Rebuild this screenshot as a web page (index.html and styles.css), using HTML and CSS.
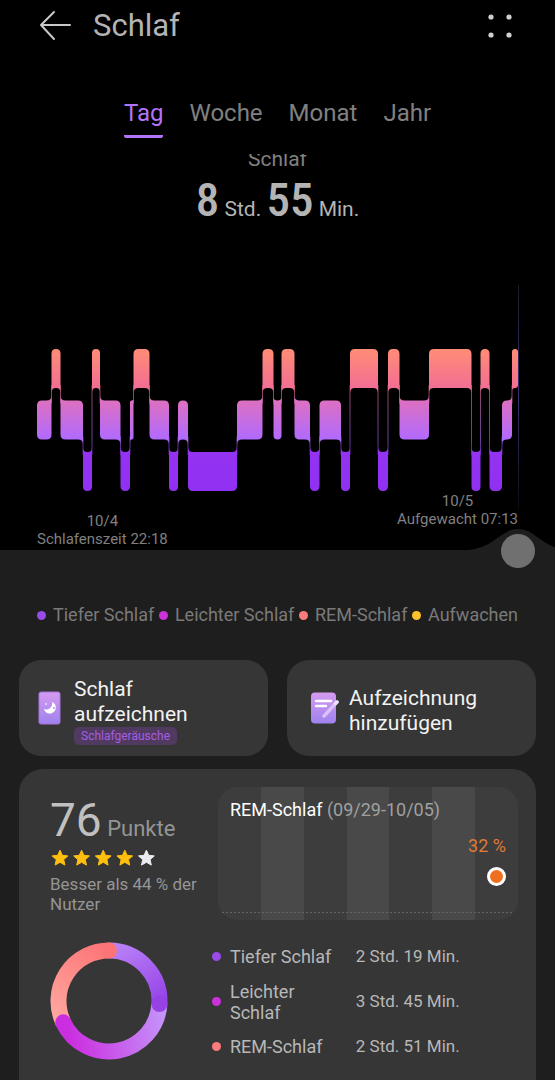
FILE: index.html
```html
<!DOCTYPE html>
<html lang="de">
<head>
    <meta charset="UTF-8">
    <meta name="viewport" content="width=device-width, initial-scale=1.0">
    <title>Schlaf</title>
    <link rel="stylesheet" href="styles.css">
</head>
<body>
    <header class="topbar">
        <button type="button" class="icon-btn" aria-label="Zurück">
            <svg width="32" height="32" viewBox="0 0 32 32" fill="none" stroke="#c8c8c8" stroke-width="2" stroke-linecap="round" stroke-linejoin="round">
                <path d="M15 2 L2 15 L15 29 M2 15 H31"/>
            </svg>
        </button>
        <h1>Schlaf</h1>
        <button type="button" class="icon-btn" aria-label="Menü">
            <svg width="24" height="24" viewBox="0 0 24 24" fill="#d0d0d0">
                <circle cx="3" cy="3" r="2.6"/><circle cx="21" cy="3" r="2.6"/>
                <circle cx="3" cy="21" r="2.6"/><circle cx="21" cy="21" r="2.6"/>
            </svg>
        </button>
    </header>

    <nav class="tabs">
        <a href="#tag" class="active">Tag</a>
        <a href="#woche">Woche</a>
        <a href="#monat">Monat</a>
        <a href="#jahr">Jahr</a>
    </nav>

    <main>
        <section class="total">
            <h2>Schlaf</h2>
            <p><b>8</b> Std. <b>55</b> Min.</p>
        </section>

        <section class="timeline">
            <svg id="chart" viewBox="0 280 555 212">
                <defs>
                    <linearGradient id="stages" gradientUnits="userSpaceOnUse" x1="0" y1="349" x2="0" y2="491">
                        <stop offset="0" stop-color="#ff8d76"/>
                        <stop offset="0.28" stop-color="#f26d94"/>
                        <stop offset="0.36" stop-color="#de70c0"/>
                        <stop offset="0.64" stop-color="#b06aff"/>
                        <stop offset="0.72" stop-color="#9433f1"/>
                        <stop offset="1" stop-color="#9030f2"/>
                    </linearGradient>
                    <linearGradient id="cursor" gradientUnits="userSpaceOnUse" x1="0" y1="285" x2="0" y2="510">
                        <stop offset="0" stop-color="#1c182c"/>
                        <stop offset="0.5" stop-color="#3c3068"/>
                        <stop offset="1" stop-color="#0c0a14"/>
                    </linearGradient>
                </defs>
                <rect x="518" y="285" width="1" height="225" fill="url(#cursor)"/>
            </svg>
            <div class="times">
                <p>10/4<br>Schlafenszeit 22:18</p>
                <p>10/5<br>Aufgewacht 07:13</p>
            </div>
        </section>

        <div class="panel">
            <svg class="hump" width="104" height="22" viewBox="0 0 104 22">
                <path d="M0 22 C28 21 34 1 52 1 C70 1 76 21 104 22 Z" fill="#1e1e1e"/>
            </svg>
            <input class="scrubber" type="range" min="0" max="535" value="535" aria-label="Zeitpunkt">

            <ul class="legend">
                <li><i class="dot deep"></i>Tiefer Schlaf</li>
                <li><i class="dot light"></i>Leichter Schlaf</li>
                <li><i class="dot rem"></i>REM-Schlaf</li>
                <li><i class="dot awake"></i>Aufwachen</li>
            </ul>

            <div class="actions">
                <button type="button">
                    <svg width="24" height="34" viewBox="0 0 24 34">
                        <defs>
                            <linearGradient id="lilac" x1="0" y1="0" x2="0" y2="1">
                                <stop offset="0" stop-color="#d49af0"/>
                                <stop offset="1" stop-color="#9f82ee"/>
                            </linearGradient>
                        </defs>
                        <rect x="0.5" y="0.5" width="22" height="33" rx="3" fill="#a873dc"/>
                        <rect x="1.5" y="1.5" width="20" height="31" rx="2" fill="url(#lilac)"/>
                        <path d="M14 11 A6 6 0 1 1 6 18 A6 6 0 0 0 14 11 Z" fill="#fff"/>
                        <circle cx="16" cy="17" r="1" fill="#b98af0"/>
                        <circle cx="8" cy="13" r="1" fill="#f0dcff"/>
                    </svg>
                    <span>Schlaf aufzeichnen<small>Schlafgeräusche</small></span>
                </button>
                <button type="button">
                    <svg width="28" height="32" viewBox="0 0 28 32">
                        <rect x="0" y="0.5" width="25" height="31" rx="4" fill="url(#lilac)"/>
                        <path d="M5 9 H20 M5 14 H15" stroke="#fff" stroke-width="2.4" stroke-linecap="round"/>
                        <path d="M13 24 L26 10" stroke="#d9c0fa" stroke-width="3.4" stroke-linecap="round"/>
                        <path d="M24.5 11.5 L26 10" stroke="#efe2ff" stroke-width="3.4" stroke-linecap="round"/>
                    </svg>
                    <span>Aufzeichnung hinzufügen</span>
                </button>
            </div>

            <section class="card">
                <div class="score">
                    <p class="points"><b>76</b> Punkte</p>
                    <svg class="stars" width="106" height="18" viewBox="0 0 106 18" role="img" aria-label="4 von 5 Sternen">
                        <defs>
                            <path id="star" stroke-linejoin="round" stroke-width="1" d="M9 1.2 L11.3 6.3 L16.9 6.9 L12.7 10.6 L13.9 16.1 L9 13.3 L4.1 16.1 L5.3 10.6 L1.1 6.9 L6.7 6.3 Z"/>
                        </defs>
                        <g fill="#ffbf0f" stroke="#ffbf0f">
                            <use href="#star" x="1"/>
                            <use href="#star" x="22.6"/>
                            <use href="#star" x="44.2"/>
                            <use href="#star" x="65.8"/>
                        </g>
                        <use href="#star" x="87.4" fill="#ececf0" stroke="#ececf0"/>
                    </svg>
                    <p class="compare">Besser als 44 % der Nutzer</p>
                </div>

                <div class="trend">
                    <h3>REM-Schlaf <span>(09/29-10/05)</span></h3>
                    <p class="value">32 %<i class="marker"></i></p>
                </div>

                <svg class="donut" width="118" height="118" viewBox="0 0 118 118" fill="none" stroke-width="16">
                    <defs>
                        <linearGradient id="gDeep" gradientUnits="userSpaceOnUse" x1="60" y1="8" x2="104" y2="70">
                            <stop offset="0" stop-color="#b982f8"/>
                            <stop offset="1" stop-color="#9440e5"/>
                        </linearGradient>
                        <linearGradient id="gLight" gradientUnits="userSpaceOnUse" x1="112" y1="62" x2="16" y2="84">
                            <stop offset="0" stop-color="#c494fa"/>
                            <stop offset="1" stop-color="#cb2edf"/>
                        </linearGradient>
                        <linearGradient id="gRem" gradientUnits="userSpaceOnUse" x1="12" y1="80" x2="62" y2="8">
                            <stop offset="0" stop-color="#ffa79f"/>
                            <stop offset="1" stop-color="#fc7476"/>
                        </linearGradient>
                    </defs>
                    <path d="M59 8.5 A50.5 50.5 0 0 1 109.4 62" stroke="url(#gDeep)"/>
                    <path d="M13.2 80.3 A50.5 50.5 0 0 1 59 8.5" stroke="url(#gRem)"/>
                    <circle cx="59" cy="8.5" r="8" fill="#fc7476" stroke="none"/>
                    <path d="M109.4 62 A50.5 50.5 0 0 1 13.2 80.3" stroke="url(#gLight)"/>
                    <circle cx="13.2" cy="80.3" r="8" fill="#cb2edf" stroke="none"/>
                    <circle cx="109.4" cy="62" r="8" fill="#9642e6" stroke="none"/>
                </svg>

                <table class="phases">
                    <tr><th scope="row"><i class="dot deep"></i>Tiefer Schlaf</th><td>2 Std. 19 Min.</td></tr>
                    <tr><th scope="row"><i class="dot light"></i>Leichter Schlaf</th><td>3 Std. 45 Min.</td></tr>
                    <tr><th scope="row"><i class="dot rem"></i>REM-Schlaf</th><td>2 Std. 51 Min.</td></tr>
                </table>
            </section>
        </div>
    </main>

    <script src="chart.js"></script>
</body>
</html>
```
FILE: chart.js
```js
// Schlafphasen: [Stufe, Ende], Stufe 0 = REM, 1 = leicht, 2 = tief
const phases = [
    [1, 51.5], [0, 60.5], [1, 83], [2, 92], [0, 100], [1, 120.5], [2, 130],
    [1, 133.5], [0, 149.5], [1, 169], [2, 178], [1, 188], [2, 237], [1, 262.5],
    [0, 273.5], [1, 281.5], [0, 294.5], [1, 310], [2, 319.5], [1, 341], [2, 350],
    [0, 378], [2, 388], [0, 399.5], [1, 429], [0, 471.5], [2, 480.5], [0, 489.5],
    [2, 502], [1, 512], [0, 518]
];
const tops = [349, 400.5, 452];
const blockHeight = 39;

let d = '';
let lines = '';
let x0 = 37;
phases.forEach(([stage, x1], i) => {
    const prev = i > 0 ? phases[i - 1][0] : stage;
    const next = i < phases.length - 1 ? phases[i + 1][0] : stage;
    const top = tops[stage];
    const bottom = top + blockHeight;
    const r = Math.min(5, (x1 - x0) / 2);

    // Ecken zum Nachbarn hin laufen in die Verbindungslinie aus
    const topLeft = prev < stage ? top - r : top + r;
    const topRight = next < stage ? top - r : top + r;
    const bottomLeft = prev > stage ? bottom + r : bottom - r;
    const bottomRight = next > stage ? bottom + r : bottom - r;

    d += `M${x0} ${topLeft} Q${x0} ${top} ${x0 + r} ${top} H${x1 - r} Q${x1} ${top} ${x1} ${topRight} `;
    d += `V${bottomRight} Q${x1} ${bottom} ${x1 - r} ${bottom} H${x0 + r} Q${x0} ${bottom} ${x0} ${bottomLeft} Z `;

    if (next !== stage) {
        const from = tops[Math.min(stage, next)] + blockHeight - 3;
        const to = tops[Math.max(stage, next)] + 3;
        lines += `<rect x="${x1 - 0.5}" y="${from}" width="1" height="${to - from}" opacity="0.6"/>`;
    }
    x0 = x1;
});

document.getElementById('chart').insertAdjacentHTML('beforeend',
    `<g fill="url(#stages)"><path d="${d}"/>${lines}</g>`);
```
FILE: styles.css
```css
* {
    box-sizing: border-box;
}
body {
    margin: 0;
    background: #000;
    color: #b4b4b4;
    font-family: Roboto, "Liberation Sans", sans-serif;
    overflow-x: hidden;
}
h1, h2, h3, p, ul {
    margin: 0;
    padding: 0;
    font-weight: 400;
}
button {
    border: none;
    padding: 0;
    font: inherit;
    cursor: pointer;
}
svg {
    display: block;
    flex-shrink: 0;
}
.topbar {
    display: flex;
    align-items: center;
    height: 52px;
    padding: 0 43px 0 39px;
}
.topbar h1 {
    flex: 1;
    margin-left: 22px;
    font-size: 31px;
    line-height: 52px;
}
.icon-btn {
    background: none;
}
.tabs {
    display: flex;
    justify-content: center;
    gap: 26px;
    height: 102px;
    padding-top: 46px;
}
.tabs a {
    height: 40px;
    color: #808080;
    font-size: 24px;
    line-height: 30px;
    text-decoration: none;
}
.tabs .active {
    color: #b274f8;
    border-bottom: 3px solid #b274f8;
    border-radius: 2px;
}
.total {
    height: 126px;
    overflow: hidden;
    text-align: center;
}
.total h2 {
    margin-top: -8px;
    color: #808080;
    font-size: 21px;
    line-height: 26px;
}
.total p {
    font-size: 21px;
    line-height: 56px;
}
.total b {
    font-family: "Roboto Condensed", "Liberation Sans Narrow", Roboto, sans-serif;
    font-size: 47px;
    font-weight: 500;
}
#chart {
    width: 100%;
    overflow: visible;
}
.times {
    display: flex;
    justify-content: space-between;
    height: 58px;
    padding: 0 37px;
    color: #808080;
    font-size: 15px;
    line-height: 18px;
    text-align: center;
}
.times p:first-child {
    padding-top: 20px;
}
.panel {
    position: relative;
    padding: 54px 19px 0;
    background: #1e1e1e;
}
.hump {
    position: absolute;
    right: -15px;
    bottom: 100%;
}
.scrubber {
    position: absolute;
    top: -16px;
    left: 20px;
    width: calc(100% - 40px);
    height: 34px;
    margin: 0;
    background: none;
    appearance: none;
}
.scrubber::-webkit-slider-thumb {
    appearance: none;
    width: 34px;
    height: 34px;
    border-radius: 50%;
    background: #707070;
}
.legend {
    display: flex;
    justify-content: space-between;
    padding: 0 18px;
    color: #7a7a7a;
    font-size: 18px;
    line-height: 22px;
    list-style: none;
    white-space: nowrap;
}
.legend li {
    display: flex;
    align-items: center;
    gap: 7px;
}
.dot {
    display: block;
    flex-shrink: 0;
    width: 9px;
    height: 9px;
    border-radius: 50%;
}
.deep {
    background: #984be8;
}
.light {
    background: #cb32dc;
}
.rem {
    background: #fc7b7b;
}
.awake {
    background: #fcc22c;
}
.actions {
    display: grid;
    grid-template-columns: 1fr 1fr;
    gap: 19px;
    margin-top: 34px;
}
.actions button {
    display: flex;
    align-items: center;
    gap: 12px;
    height: 96px;
    padding: 5px 52px 0 19px;
    border-radius: 22px;
    background: #363636;
    color: #f2f2f2;
    font-size: 21px;
    line-height: 25px;
    text-align: left;
}
.actions button:last-child {
    padding-left: 24px;
    gap: 10px;
}
.actions svg {
    margin-top: -5px;
}
.actions small {
    display: block;
    width: max-content;
    padding: 0 7px;
    border-radius: 5px;
    background: #503a60;
    color: #a65ee0;
    font-size: 12px;
    line-height: 18px;
}
.card {
    display: grid;
    grid-template-columns: 155px 1fr;
    column-gap: 13px;
    row-gap: 14px;
    margin-top: 13px;
    padding: 18px 18px 20px 31px;
    border-radius: 24px 24px 0 0;
    background: #363636;
}
.points {
    padding-top: 13px;
    color: #959595;
    font-size: 22px;
    line-height: 40px;
}
.points b {
    color: #c0c0c0;
    font-size: 46px;
    font-weight: 400;
}
.compare {
    margin-top: 7px;
    color: #959595;
    font-size: 17px;
    line-height: 20px;
}
.trend {
    position: relative;
    height: 133px;
    padding: 12px;
    border-radius: 20px;
    background: repeating-linear-gradient(90deg, #3d3d3d 0 calc(100% / 7), #494949 calc(100% / 7) calc(200% / 7));
}
.trend::after {
    content: '';
    position: absolute;
    left: 4px;
    right: 4px;
    bottom: 7px;
    height: 1px;
    background: repeating-linear-gradient(90deg, #646464 0 2px, transparent 2px 4px);
}
.trend h3 {
    color: #fff;
    font-size: 18px;
    line-height: 22px;
}
.trend span {
    color: #a0a0a0;
}
.value {
    display: flex;
    flex-direction: column;
    align-items: flex-end;
    gap: 10px;
    margin-top: 14px;
    color: #e07a34;
    font-size: 18px;
    line-height: 22px;
}
.marker {
    width: 19px;
    height: 19px;
    border: 3px solid #fff;
    border-radius: 50%;
    background: #ee701e;
}
.donut {
    margin-top: 8px;
}
.phases {
    width: 252px;
    margin-left: -6px;
    border-collapse: collapse;
    color: #b8b8b8;
    font-size: 18px;
    line-height: 21px;
}
.phases tr {
    height: 45px;
}
.phases th {
    display: flex;
    align-items: center;
    gap: 9px;
    width: 138px;
    height: 45px;
    padding: 0 10px 0 0;
    font-weight: 400;
    text-align: left;
}
.phases td {
    padding: 0;
    font-size: 17px;
    white-space: nowrap;
}
```
